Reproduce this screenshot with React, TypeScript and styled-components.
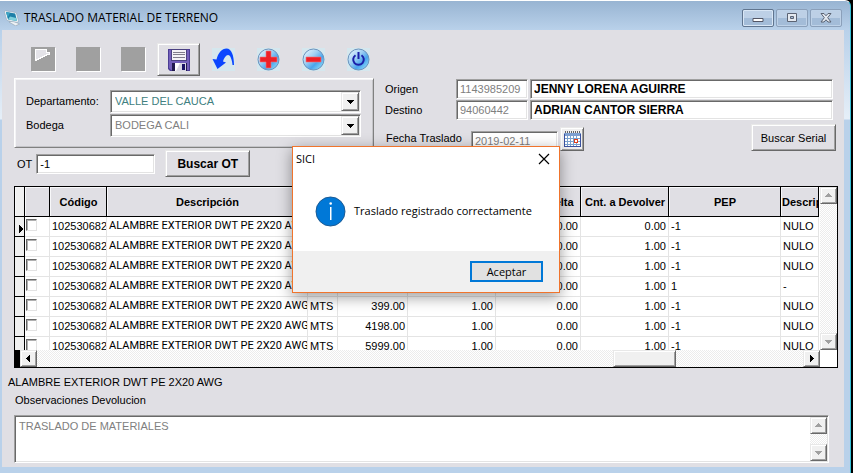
import React from 'react';
import styled, { createGlobalStyle, css } from 'styled-components';

const FACE = '#e0dfe4';
const UI_FONT = '"Liberation Sans", Arial, sans-serif';
const SYSTEM_FONT = '"Open Sans", "Noto Sans", sans-serif';

const GlobalStyle = createGlobalStyle`
  *, *::before, *::after { box-sizing: border-box; }
  body { margin: 0; background: #000; font: 11px/16px ${UI_FONT}; color: #000; }
  button, input, select, textarea { font: inherit; color: inherit; margin: 0; border-radius: 0; }
`;

const sunken = css`
  border: 1px solid;
  border-color: #a0a0a0 #fff #fff #a0a0a0;
  box-shadow: inset 1px 1px #696969, inset -1px -1px #e3e3e3;
`;

const raised = css`
  border: 1px solid;
  border-color: #e8e8e8 #696969 #696969 #e8e8e8;
  box-shadow: inset 1px 1px #fff, inset -1px -1px #a0a0a0;
`;

const AppWindow = styled.div`
  position: relative;
  min-height: 100vh;
  margin-right: 2px;
  display: flex;
  flex-direction: column;
  border-top: 1px solid #fff;
  border-right: 1px solid #35c1d8;
  border-top-right-radius: 6px;
  background: linear-gradient(#98b4d2 0, #b9d1ea 30px, #e6eff8 118px, #b9d1ea 119px);
`;

const TitleBar = styled.header`
  height: 29px;
  display: flex;
  align-items: center;
  padding: 4px 8px 0 4px;
  background: linear-gradient(#98b4d2, #b9d1ea);
  border-top-right-radius: 6px;
`;

const Title = styled.h1`
  flex: 1;
  margin: 0 0 0 4px;
  font: 12px/16px ${SYSTEM_FONT};
`;

const WindowButtons = styled.div`
  display: flex;
  gap: 2px;
`;

const WindowButton = styled.button<{ $strong?: boolean }>`
  width: 32px;
  height: 18px;
  padding: 0;
  display: grid;
  place-items: center;
  border: 1px solid ${(p) => (p.$strong ? '#60758f' : '#8ba0ba')};
  border-radius: 2px;
  background: linear-gradient(#bdd0e6 50%, #a3bcd8 50%);
  box-shadow: inset 0 0 0 1px ${(p) => (p.$strong ? '#d8e6f5' : '#bed2e8')};
`;

const Client = styled.main`
  flex: 1;
  margin: 0 6px 6px 2px;
  padding: 13px 0 4px;
  background: ${FACE};
`;

const Toolbar = styled.div`
  display: flex;
  gap: 2px;
  padding: 0 20px;
`;

const ToolButton = styled.button<{ $raised?: boolean }>`
  width: 43px;
  height: 33px;
  padding: 0;
  display: grid;
  place-items: center;
  background: none;
  border: 1px solid transparent;
  ${(p) => p.$raised && raised}
`;

const TopSection = styled.section`
  display: grid;
  grid-template-columns: 360px 1fr;
  gap: 10px;
  padding: 2px 8px 0 12px;
`;

const Panel = styled.div`
  height: 70px;
  display: grid;
  grid-template-columns: 84px 1fr;
  align-content: center;
  align-items: center;
  row-gap: 1px;
  padding: 0 12px 0 11px;
  border: 1px solid;
  border-color: #fff #808080 #808080 #fff;
  box-shadow: inset 1px 1px #f4f4f6, inset -1px -1px #c4c4c8;
`;

const Combo = styled.div`
  ${sunken}
  height: 23px;
  display: grid;
  grid-template-columns: 1fr 18px;
  padding: 1px;
  background: #fff;
`;

const ComboSelect = styled.select<{ $tone: string }>`
  grid-area: 1 / 1 / 2 / 3;
  appearance: none;
  border: 0;
  padding: 0 20px 0 3px;
  background: transparent;
  color: ${(p) => p.$tone};
`;

const ComboArrow = styled.span`
  ${raised}
  grid-area: 1 / 2;
  display: grid;
  place-items: center;
  background: #f0f0f0;
  pointer-events: none;
`;

const OrderRow = styled.div`
  display: flex;
  align-items: center;
  gap: 4px;
  margin-top: 2px;
  padding-left: 3px;
`;

const TextInput = styled.input<{ $width?: number; $bold?: boolean; $muted?: boolean }>`
  ${sunken}
  width: ${(p) => (p.$width ? `${p.$width}px` : '100%')};
  height: 20px;
  padding: 0 3px;
  min-width: 0;
  background: #fff;
  color: ${(p) => (p.$muted ? '#808080' : '#000')};
  ${(p) => p.$bold && css`font-size: 12px; font-weight: bold;`}
`;

const PushButton = styled.button<{ $bold?: boolean }>`
  ${raised}
  width: 85px;
  height: 27px;
  padding: 0;
  background: ${FACE};
  ${(p) => p.$bold && css`font-size: 12px; font-weight: bold; margin-left: 6px;`}
`;

const Parties = styled.div`
  display: grid;
  grid-template-columns: 69px 72px 1fr;
  align-items: center;
  gap: 1px 2px;
  padding: 1px 3px 0 1px;
`;

const DateRow = styled.div`
  display: flex;
  align-items: flex-end;
  gap: 2px;
  margin-top: 4px;
`;

const DateLabel = styled.label`
  width: 85px;
  padding: 0 0 5px 2px;
`;

const CalendarButton = styled.button`
  ${raised}
  width: 24px;
  height: 24px;
  padding: 0;
  display: grid;
  place-items: center;
  background: #f0f0f0;
`;

const Spacer = styled.span`
  flex: 1;
`;

const GridFrame = styled.section`
  display: grid;
  grid-template-columns: 1fr 17px;
  grid-template-rows: 163px 17px;
  margin: 9px 6px 0 12px;
  border: 1px solid #000;
  background: #fff;
`;

const GridView = styled.div`
  overflow: hidden;
  min-width: 0;
`;

const Table = styled.table`
  width: 804px;
  table-layout: fixed;
  border-collapse: separate;
  border-spacing: 0;
`;

const HeadCell = styled.th<{ $selector?: boolean; $left?: boolean }>`
  height: 30px;
  padding: 0 0 0 1px;
  overflow: hidden;
  white-space: nowrap;
  font-weight: bold;
  text-align: ${(p) => (p.$left ? 'left' : 'center')};
  background: ${(p) => (p.$selector ? '#f0f0f0' : FACE)};
  border-right: 1px solid #000;
  border-bottom: 1px solid #000;
  box-shadow: inset 1px 1px #f8f8fa;
`;

const Cell = styled.td<{ $right?: boolean; $narrow?: boolean }>`
  height: 20px;
  padding: 0 ${(p) => (p.$right ? '2px' : '0')} 2px 2px;
  overflow: hidden;
  white-space: nowrap;
  line-height: 16px;
  text-align: ${(p) => (p.$right ? 'right' : 'left')};
  border-right: 1px solid #e4e4e4;
  border-bottom: 1px solid #e4e4e4;
  ${(p) => p.$narrow && css`font-family: Roboto, ${UI_FONT};`}
`;

const SelectorCell = styled.td`
  height: 20px;
  padding: 5px 0 0 0;
  line-height: 0;
  text-align: right;
  overflow: hidden;
  background: #f0f0f0;
  border-right: 1px solid #000;
  border-bottom: 1px solid #000;
`;

const CheckCell = styled(Cell)`
  padding: 2px 0 0 1px;
  line-height: 0;
  vertical-align: top;
`;

const CheckBox = styled.input`
  appearance: none;
  display: block;
  width: 11px;
  height: 12px;
  background: #fff;
  border: 1px solid;
  border-color: #696969 #e3e3e3 #e3e3e3 #696969;
  box-shadow: inset 1px 1px #b0b0b0;
`;

const Track = styled.div<{ $vertical?: boolean }>`
  display: flex;
  flex-direction: ${(p) => (p.$vertical ? 'column' : 'row')};
  justify-content: space-between;
  background: repeating-conic-gradient(#ffffff 0 25%, #ececec 0 50%) 0 0 / 2px 2px;
`;

const HorizontalTrack = styled(Track)`
  border-left: 5px solid #000;
`;

const ScrollButton = styled.button`
  ${raised}
  width: 17px;
  height: 17px;
  padding: 0;
  display: grid;
  place-items: center;
  background: #f0f0f0;
`;

const Thumb = styled.span`
  ${raised}
  width: 63px;
  margin-left: 576px;
  background: #f0f0f0;
`;

const Footer = styled.section`
  display: flex;
  flex-direction: column;
  padding: 6px 13px 0 6px;
`;

const ItemName = styled.output`
  line-height: 16px;
`;

const NotesLabel = styled.label`
  margin: 2px 0 7px 7px;
`;

const NotesBox = styled.div`
  ${sunken}
  display: flex;
  height: 48px;
  margin: 0 2px 0 6px;
  padding: 1px;
  background: #fff;
`;

const Notes = styled.textarea`
  flex: 1;
  padding: 1px 3px;
  border: 0;
  resize: none;
  overflow: hidden;
  background: #fff;
  color: #808080;
`;

const Dialog = styled.div`
  position: absolute;
  top: 145px;
  left: 50%;
  width: 268px;
  margin-left: -133px;
  border: 1px solid #f0742c;
  background: #fff;
  box-shadow: 0 4px 14px rgba(0, 0, 0, 0.4);
  font: 11px/16px ${SYSTEM_FONT};
`;

const DialogTitle = styled.div`
  display: flex;
  align-items: center;
  justify-content: space-between;
  height: 24px;
  padding: 0 9px 0 3px;
`;

const DialogHeading = styled.h2`
  margin: 0;
  font: inherit;
`;

const PlainButton = styled.button`
  padding: 0;
  border: 0;
  background: none;
  display: grid;
`;

const DialogBody = styled.div`
  display: flex;
  align-items: center;
  gap: 8px;
  height: 80px;
  padding-left: 22px;
`;

const DialogFooter = styled.div`
  display: flex;
  justify-content: flex-end;
  padding: 10px 16px;
  background: #f0f0f0;
`;

const AcceptButton = styled.button`
  width: 73px;
  height: 21px;
  padding: 0;
  line-height: 16px;
  border: 2px solid #0078d7;
  background: #e1e1e1;
`;

type Direction = 'up' | 'down' | 'left' | 'right';

const ARROWS: Record<Direction, string> = {
  up: 'M4 2h1v1h1v1h1v1h1v1H1V5h1V4h1V3h1z',
  down: 'M1 3h7v1H7v1H6v1H5v1H4V6H3V5H2V4H1z',
  left: 'M6 1v7H5V7H4V6H3V5H2V4h1V3h1V2h1V1z',
  right: 'M3 1v7h1V7h1V6h1V5h1V4H6V3H5V2H4V1z',
};

function Arrow({ to, color = '#000' }: { to: Direction; color?: string }) {
  return (
    <svg width="9" height="9" viewBox="0 0 9 9" shapeRendering="crispEdges" aria-hidden="true">
      <path d={ARROWS[to]} fill={color} />
    </svg>
  );
}

function RowMarker() {
  return (
    <svg width="5" height="8" viewBox="0 0 5 8" shapeRendering="crispEdges" aria-hidden="true">
      <path d="M0 0h1v1h1v1h1v1h1v2H3v1H2v1H1v1H0z" fill="#000" />
    </svg>
  );
}

function AppIcon() {
  return (
    <svg width="16" height="16" viewBox="0 0 16 16" aria-hidden="true">
      <path d="M5 12 9 11l6.500 3-4 1.800z" fill="#eef2f5" stroke="#8b98a5" strokeWidth=".5" />
      <path d="M1 .8 11.500 2.500Q12.500 2.800 12.700 4L14.500 11Q14.700 12.500 13 12.300L4 10.800Q2.800 10.500 2.500 9.500L.5 2Q.3.800 1 .8z" fill="#f4f8fb" stroke="#8fa3b5" strokeWidth=".6" />
      <path d="M2 2 11.200 3.600 13 11 4 9.600z" fill="#1d7fa8" />
      <path d="M6 6.500 12.200 8 13 11 4 9.600z" fill="#7fd0dc" />
      <path d="M2 2 6 2.700 3.600 8z" fill="#3ba3c2" />
    </svg>
  );
}

function DisabledIcon({ page }: { page?: boolean }) {
  return (
    <svg width="25" height="25" viewBox="0 0 25 25" shapeRendering="crispEdges" aria-hidden="true">
      <path d="M1 1h24v24H1z" fill="#fff" />
      <path d="M0 0h24v24H0z" fill="#a0a0a0" />
      {page && <path d="M4 2h12v3h3v3h-3v1h-2v1h-2v1h-2v1H8v1H6v1H4z" fill="#fff" />}
      {page && <path d="M5 3h10v3h3v1h-3v1h-2v1h-2v1H9v1H7v1H5z" fill="#e4e3e8" />}
    </svg>
  );
}

function SaveIcon() {
  return (
    <svg width="22" height="22" viewBox="0 0 22 22" aria-hidden="true">
      <path d="M0 0h22v22H2L0 20z" fill="#4b3d94" />
      <path d="M1 1h20v20H3l-2-2z" fill="#7460bb" />
      <path d="M3 0h16v12H3z" fill="#4a4180" />
      <path d="M4 1h14v10H4z" fill="#f3f2f6" />
      <path d="M5 3.500h12M5 5.500h12M5 8.500h12" stroke="#807d8c" />
      <path d="M4 14h15v8H4z" fill="#22194f" />
      <path d="M7 14h11v8H7z" fill="#d9d7e4" />
      <path d="M7 14h5l-4 8H7z" fill="#fff" />
      <path d="M14 15h3v6h-3z" fill="#1a1266" />
    </svg>
  );
}

function UndoIcon() {
  return (
    <svg width="25" height="25" viewBox="0 0 25 25" aria-hidden="true">
      <path d="M1 1h23v23H1z" fill="#d5e7ee" />
      <path d="M1.500 12l4 .500C7 6 11 1.500 15.500 1.500c5 0 7.500 7 7.500 16.500h-1.500c-.5-5-2-10-4.500-10-2 0-4 3-5 6.500l3 1L6.500 22z" fill="#0a46ff" />
    </svg>
  );
}

function OrbIcon({ kind }: { kind: 'plus' | 'minus' | 'power' }) {
  const id = `orb-${kind}`;
  return (
    <svg width="25" height="25" viewBox="0 0 25 25" aria-hidden="true">
      <defs>
        <linearGradient id={id} x1="0" y1="0" x2="1" y2="1">
          <stop offset="0" stopColor="#f4fbff" />
          <stop offset=".4" stopColor="#9fd0f4" />
          <stop offset=".65" stopColor="#4aa4ec" />
          <stop offset="1" stopColor="#a4f2ff" />
        </linearGradient>
      </defs>
      <path d="M1 1h23v23H1z" fill="#d5e7ee" />
      <circle cx="12.500" cy="12.500" r="10.500" fill={`url(#${id})`} stroke="#6b93bd" />
      {kind === 'plus' && <path d="M10 4h5v6h6v5h-6v6h-5v-6H4v-5h6z" fill="#ee2028" stroke="#f5777b" strokeWidth=".6" />}
      {kind === 'minus' && <path d="M5 10h15v5H5z" fill="#ee2028" stroke="#f5777b" strokeWidth=".6" />}
      {kind === 'power' && (
        <path d="M9.500 8.200a5.300 5.300 0 1 0 6 0M12.500 5v7" fill="none" stroke="#1b1fa8" strokeWidth="2" />
      )}
    </svg>
  );
}

function CalendarIcon() {
  return (
    <svg width="17" height="17" viewBox="0 0 17 17" shapeRendering="crispEdges" aria-hidden="true">
      <path d="M0 2h17v14H0z" fill="#fff" />
      <path d="M0 2h17v3H0z" fill="#7d9fd0" />
      <path d="M1.500 0v2M3.500 0v2M5.500 0v2M7.500 0v2M9.500 0v2M11.500 0v2M13.500 0v2M15.500 0v2" stroke="#666" />
      <path d="M3.500 5v11M6.500 5v11M9.500 5v11M12.500 5v11M1 7.500h15M1 10.500h15M1 13.500h15" stroke="#7ba3cf" />
      <path d="M.5 3v13M16.500 3v13M0 15.500h17" stroke="#3a52a0" fill="none" />
      <path d="M10.500 8.500h3v3h-3z" fill="#fff" stroke="#e0401c" />
    </svg>
  );
}

function InfoIcon() {
  return (
    <svg width="31" height="31" viewBox="0 0 31 31" aria-hidden="true">
      <circle cx="15.500" cy="15.500" r="14.500" fill="#0078d7" stroke="#1b5a94" />
      <path d="M15 11h1.500v13H15z" fill="#fff" />
      <circle cx="15.700" cy="7.500" r="1.300" fill="#fff" />
    </svg>
  );
}

const TOOLS = [
  { name: 'Nuevo', icon: <DisabledIcon page />, disabled: true },
  { name: 'Editar', icon: <DisabledIcon />, disabled: true },
  { name: 'Buscar', icon: <DisabledIcon />, disabled: true },
  { name: 'Guardar', icon: <SaveIcon />, raised: true },
  { name: 'Deshacer', icon: <UndoIcon /> },
  { name: 'Agregar', icon: <OrbIcon kind="plus" /> },
  { name: 'Quitar', icon: <OrbIcon kind="minus" /> },
  { name: 'Salir', icon: <OrbIcon kind="power" /> },
];

const COLUMNS = [
  { width: 10, heading: '' },
  { width: 25, heading: '' },
  { width: 57, heading: 'Código' },
  { width: 201, heading: 'Descripción' },
  { width: 30, heading: 'Und' },
  { width: 70, heading: 'Cantidad' },
  { width: 88, heading: 'Cnt. Usada' },
  { width: 85, heading: 'Cnt. Devuelta' },
  { width: 88, heading: 'Cnt. a Devolver' },
  { width: 112, heading: 'PEP' },
  { width: 38, heading: 'Descrip', left: true },
];

const ROWS = [
  { stock: '0.00', back: '0.00', pep: '-1', text: 'NULO' },
  { stock: '1.00', back: '1.00', pep: '-1', text: 'NULO' },
  { stock: '1.00', back: '1.00', pep: '-1', text: 'NULO' },
  { stock: '1.00', back: '1.00', pep: '1', text: '-' },
  { stock: '399.00', back: '1.00', pep: '-1', text: 'NULO' },
  { stock: '4198.00', back: '1.00', pep: '-1', text: 'NULO' },
  { stock: '5999.00', back: '1.00', pep: '-1', text: 'NULO' },
];

function MaterialGrid() {
  return (
    <GridFrame>
      <GridView>
        <Table>
          <colgroup>
            {COLUMNS.map((column, i) => (
              <col key={i} width={column.width} />
            ))}
          </colgroup>
          <thead>
            <tr>
              {COLUMNS.map((column, i) => (
                <HeadCell key={i} $selector={i === 0} $left={column.left}>{column.heading}</HeadCell>
              ))}
            </tr>
          </thead>
          <tbody>
            {ROWS.map((row, i) => (
              <tr key={i}>
                <SelectorCell>{i === 0 && <RowMarker />}</SelectorCell>
                <CheckCell>
                  <CheckBox type="checkbox" aria-label={`Seleccionar fila ${i + 1}`} />
                </CheckCell>
                <Cell>102530682</Cell>
                <Cell $narrow>ALAMBRE EXTERIOR DWT PE 2X20 AWG</Cell>
                <Cell>MTS</Cell>
                <Cell $right>{row.stock}</Cell>
                <Cell $right>1.00</Cell>
                <Cell $right>0.00</Cell>
                <Cell $right>{row.back}</Cell>
                <Cell>{row.pep}</Cell>
                <Cell>{row.text}</Cell>
              </tr>
            ))}
          </tbody>
        </Table>
      </GridView>
      <Track $vertical>
        <ScrollButton aria-label="Subir"><Arrow to="up" color="#a0a0a0" /></ScrollButton>
        <ScrollButton aria-label="Bajar"><Arrow to="down" color="#a0a0a0" /></ScrollButton>
      </Track>
      <HorizontalTrack>
        <ScrollButton aria-label="Izquierda"><Arrow to="left" /></ScrollButton>
        <Thumb />
        <Spacer />
        <ScrollButton aria-label="Derecha"><Arrow to="right" /></ScrollButton>
      </HorizontalTrack>
    </GridFrame>
  );
}

function MessageDialog() {
  return (
    <Dialog role="dialog" aria-labelledby="dialog-title">
      <DialogTitle>
        <DialogHeading id="dialog-title">SICI</DialogHeading>
        <PlainButton aria-label="Cerrar mensaje">
          <svg width="12" height="12" viewBox="0 0 12 12" aria-hidden="true">
            <path d="M1 1l10 10M11 1 1 11" stroke="#000" strokeWidth="1.200" />
          </svg>
        </PlainButton>
      </DialogTitle>
      <DialogBody>
        <InfoIcon />
        <span>Traslado registrado correctamente</span>
      </DialogBody>
      <DialogFooter>
        <AcceptButton>Aceptar</AcceptButton>
      </DialogFooter>
    </Dialog>
  );
}

export default function App() {
  return (
    <>
      <GlobalStyle />
      <AppWindow>
        <TitleBar>
          <AppIcon />
          <Title>TRASLADO MATERIAL DE TERRENO</Title>
          <WindowButtons>
            <WindowButton $strong aria-label="Minimizar">
              <svg width="12" height="10" viewBox="0 0 12 10" aria-hidden="true">
                <path d="M1 5.500h10v3H1z" fill="#fff" stroke="#535666" />
              </svg>
            </WindowButton>
            <WindowButton aria-label="Maximizar">
              <svg width="12" height="10" viewBox="0 0 12 10" aria-hidden="true">
                <path d="M1.500.5h9v8h-9z" fill="#e4e9f0" stroke="#5b6373" />
                <path d="M4.500 3.500h3v2h-3z" fill="#a3bcd8" stroke="#5b6373" />
              </svg>
            </WindowButton>
            <WindowButton aria-label="Cerrar">
              <svg width="12" height="10" viewBox="0 0 12 10" aria-hidden="true">
                <path d="M1 .5h3l2 2.300L8 .5h3L7.700 4.700 11 9H8L6 6.800 4 9H1l3.300-4.300z" fill="#e4e9f0" stroke="#5b6373" />
              </svg>
            </WindowButton>
          </WindowButtons>
        </TitleBar>
        <Client>
          <Toolbar role="toolbar">
            {TOOLS.map((tool) => (
              <ToolButton key={tool.name} aria-label={tool.name} disabled={tool.disabled} $raised={tool.raised}>
                {tool.icon}
              </ToolButton>
            ))}
          </Toolbar>
          <TopSection>
            <div>
              <Panel>
                <label htmlFor="departamento">Departamento:</label>
                <Combo>
                  <ComboSelect id="departamento" $tone="#408080">
                    <option>VALLE DEL CAUCA</option>
                  </ComboSelect>
                  <ComboArrow><Arrow to="down" /></ComboArrow>
                </Combo>
                <label htmlFor="bodega">Bodega</label>
                <Combo>
                  <ComboSelect id="bodega" $tone="#808080">
                    <option>BODEGA CALI</option>
                  </ComboSelect>
                  <ComboArrow><Arrow to="down" /></ComboArrow>
                </Combo>
              </Panel>
              <OrderRow>
                <label htmlFor="ot">OT</label>
                <TextInput id="ot" $width={119} defaultValue="-1" />
                <PushButton $bold>Buscar OT</PushButton>
              </OrderRow>
            </div>
            <div>
              <Parties>
                <label htmlFor="origen">Origen</label>
                <TextInput id="origen" $muted defaultValue="1143985209" />
                <TextInput $bold aria-label="Nombre origen" defaultValue="JENNY LORENA AGUIRRE" />
                <label htmlFor="destino">Destino</label>
                <TextInput id="destino" $muted defaultValue="94060442" />
                <TextInput $bold aria-label="Nombre destino" defaultValue="ADRIAN CANTOR SIERRA" />
              </Parties>
              <DateRow>
                <DateLabel htmlFor="fecha">Fecha Traslado</DateLabel>
                <TextInput id="fecha" $width={87} $muted defaultValue="2019-02-11" />
                <CalendarButton aria-label="Abrir calendario"><CalendarIcon /></CalendarButton>
                <Spacer />
                <PushButton>Buscar Serial</PushButton>
              </DateRow>
            </div>
          </TopSection>
          <MaterialGrid />
          <Footer>
            <ItemName>ALAMBRE EXTERIOR DWT PE 2X20 AWG</ItemName>
            <NotesLabel htmlFor="observaciones">Observaciones Devolucion</NotesLabel>
            <NotesBox>
              <Notes id="observaciones" defaultValue="TRASLADO DE MATERIALES" />
              <Track $vertical>
                <ScrollButton aria-label="Subir texto"><Arrow to="up" color="#a0a0a0" /></ScrollButton>
                <ScrollButton aria-label="Bajar texto"><Arrow to="down" color="#a0a0a0" /></ScrollButton>
              </Track>
            </NotesBox>
          </Footer>
        </Client>
        <MessageDialog />
      </AppWindow>
    </>
  );
}
